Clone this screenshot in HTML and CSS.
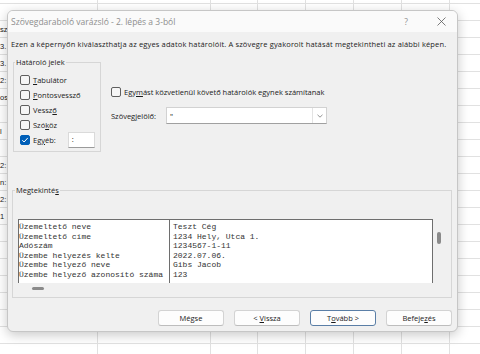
FILE: index.html
```html
<!DOCTYPE html>
<html lang="hu">
<head>
<meta charset="utf-8">
<title>Szövegdaraboló varázsló</title>
<link rel="stylesheet" href="styles.css">
</head>
<body>
<div class="sheet">
  <div class="col w98">
    <div class="labels">
      <div class="lr"></div>
      <div class="lr"><span>sz</span></div>
      <div class="lr"><span>3.</span></div>
      <div class="lr"><span>3.</span></div>
      <div class="lr"><span>2:</span></div>
      <div class="lr"><span>os</span></div>
      <div class="lr"></div>
      <div class="lr"><span>l</span></div>
      <div class="lr"></div>
      <div class="lr"><span>2:</span></div>
      <div class="lr"><span>n:</span></div>
      <div class="lr"><span>2:</span></div>
      <div class="lr"><span>1</span></div>
    </div>
  </div>
  <div class="col w113"></div>
  <div class="col w47"></div>
  <div class="col w48"></div>
  <div class="col w48"></div>
  <div class="col w48"></div>
  <div class="col w48"></div>
  <div class="col w48"></div>
</div>

<div class="dialog">
  <div class="titlebar">
    <span class="title">Szövegdaraboló varázsló - 2. lépés a 3-ból</span>
    <span class="help">?</span>
    <span class="close"><svg width="9" height="9" viewBox="0 0 9 9"><path d="M0.5 0.5L8.5 8.5M8.5 0.5L0.5 8.5" stroke="#5a5a5a" stroke-width="0.8" fill="none"/></svg></span>
  </div>
  <div class="content">
    <p class="intro">Ezen a képernyőn kiválaszthatja az egyes adatok határolóit. A szövegre gyakorolt hatását megtekintheti az alábbi képen.</p>
    <div class="top">
      <fieldset class="delims">
        <legend>Határoló jelek</legend>
        <div class="list">
          <div class="cb"><span class="box"></span><span><u>T</u>abulátor</span></div>
          <div class="cb"><span class="box"></span><span><u>P</u>ontosvessző</span></div>
          <div class="cb"><span class="box"></span><span>Vessz<u>ő</u></span></div>
          <div class="cb"><span class="box"></span><span>Szó<u>k</u>öz</span></div>
          <div class="cb other"><span class="box checked"><svg width="8" height="8" viewBox="0 0 8 8"><path d="M1.3 4.2L3.1 6L6.8 1.9" stroke="#fff" stroke-width="1" fill="none"/></svg></span><span>Eg<u>y</u>éb:</span><span class="otherinput">:</span></div>
        </div>
      </fieldset>
      <div class="opts">
        <div class="cb"><span class="box"></span><span>Egy<u>m</u>ást közvetlenül követő határolók egynek számítanak</span></div>
        <div class="qual">
          <span class="qlabel">Szöveg<u>j</u>elölő:</span>
          <div class="combo"><span class="cval">"</span><span class="arrow"><svg width="6" height="4" viewBox="0 0 6 4"><path d="M0.5 0.8L3 3.2L5.5 0.8" stroke="#777" stroke-width="0.8" fill="none"/></svg></span></div>
        </div>
      </div>
    </div>
    <fieldset class="preview">
      <legend>Megtekinté<u>s</u></legend>
      <div class="pvarea">
        <div class="pvrow">
          <div class="pv">
            <div class="pcol c1">
              <div>Üzemeltető neve</div>
              <div>Üzemeltető címe</div>
              <div>Adószám</div>
              <div>Üzembe helyezés kelte</div>
              <div>Üzembe helyező neve</div>
              <div>Üzembe helyező azonosító száma</div>
            </div>
            <div class="pcol c2">
              <div>Teszt Cég</div>
              <div>1234 Hely, Utca 1.</div>
              <div>1234567-1-11</div>
              <div>2022.07.06.</div>
              <div>Gibs Jacob</div>
              <div>123</div>
            </div>
          </div>
          <div class="vscroll"><span class="vthumb"></span></div>
        </div>
        <div class="hscroll"><span class="hthumb"></span></div>
      </div>
    </fieldset>
    <div class="buttons">
      <button class="btn">Mégse</button>
      <button class="btn">&lt; <u>V</u>issza</button>
      <button class="btn focus">T<u>o</u>vább &gt;</button>
      <button class="btn">Befeje<u>z</u>és</button>
    </div>
  </div>
</div>
</body>
</html>
```

FILE: styles.css
```css
* { box-sizing: border-box; }
html, body { margin: 0; padding: 0; }
body {
  width: 480px;
  height: 354px;
  overflow: hidden;
  background: #fff;
  position: relative;
  font-family: "Open Sans", "Noto Sans", sans-serif;
}

/* spreadsheet background */
.sheet { display: flex; height: 354px; }
.col {
  flex: none;
  height: 100%;
  border-right: 1px solid #e1e1e1;
  background-image: linear-gradient(to bottom, transparent 16px, #e1e1e1 16px);
  background-size: 100% 17px;
  background-position: 0 4px;
}
.w98 { width: 98px; }
.w113 { width: 113px; }
.w47 { width: 47px; }
.w48 { width: 48px; }
.labels { padding-top: 4px; }
.lr {
  width: 8px;
  height: 17px;
  display: flex;
  align-items: center;
  white-space: nowrap;
  font-size: 7.5px;
  color: #222;
  font-family: "Liberation Sans", sans-serif;
}

/* dialog */
.dialog {
  position: absolute;
  left: 7px;
  top: 10px;
  width: 451px;
  height: 322px;
  background: #f0f0f0;
  border: 1px solid #c6c6c6;
  border-radius: 6px;
  box-shadow: 0 3px 12px rgba(0, 0, 0, 0.22);
  overflow: hidden;
  display: flex;
  flex-direction: column;
  font-size: 7.5px;
  color: #1b1b1b;
}
.titlebar {
  flex: none;
  height: 21px;
  background: #fafafa;
  display: flex;
  align-items: center;
  padding-left: 3px;
  padding-right: 11px;
}
.title { font-size: 8.5px; color: #8e8e8e; }
.help { margin-left: auto; font-size: 8.5px; color: #8e8e8e; margin-right: 28px; }
.close { display: flex; width: 10px; justify-content: center; }

.content { flex: 1; display: flex; flex-direction: column; }
.intro { margin: 7px 0 0 3px; line-height: 10px; white-space: nowrap; letter-spacing: 0.15px; }

.top { display: flex; margin-top: 8px; padding-left: 5px; }
fieldset {
  margin: 0;
  padding: 0;
  border: 1px solid #d6d6d6;
  min-width: 0;
}
legend {
  padding: 0 1px;
  margin-left: 1px;
  line-height: 10px;
  font-size: 7.5px;
}
.delims { width: 88px; height: 95px; }
.list { padding: 5px 0 0 6px; }
.cb { display: flex; align-items: center; height: 15px; gap: 3px; white-space: nowrap; }
.box {
  flex: none;
  width: 10px;
  height: 10px;
  border: 1px solid #5f5f5f;
  border-radius: 2px;
  background: #f6f6f6;
  display: flex;
  align-items: center;
  justify-content: center;
}
.box.checked { background: #005fb8; border-color: #005fb8; }
.cb.other { height: 16px; }
.otherinput {
  margin-left: 9px;
  width: 27px;
  height: 16px;
  background: #fff;
  border: 1px solid #dadada;
  border-bottom-color: #9a9a9a;
  padding-left: 3px;
  line-height: 13px;
}

.opts { margin-left: 10px; padding-top: 27px; }
.qual { display: flex; align-items: center; margin-top: 8px; }
.qlabel { width: 55px; }
.combo {
  width: 161px;
  height: 17px;
  background: #fff;
  border: 1px solid #d2d2d2;
  border-bottom-color: #a0a0a0;
  display: flex;
  align-items: center;
}
.cval { flex: 1; padding-left: 3px; }
.arrow {
  width: 14px;
  height: 100%;
  border-left: 1px solid #e3e3e3;
  display: flex;
  align-items: center;
  justify-content: center;
}

.preview { margin: 33px 0 0 4px; width: 440px; height: 113px; }
.preview legend { margin-left: 2px; }
.pvarea { padding: 24px 0 0 5px; }
.pvrow { display: flex; }
.pv {
  width: 415px;
  height: 64px;
  background: #fff;
  border: 1px solid #6e6e6e;
  border-bottom: none;
  display: flex;
  font-family: "Liberation Mono", monospace;
  font-size: 8px;
  line-height: 9.6px;
  color: #333;
  white-space: nowrap;
}
.pcol { padding-top: 2px; height: 100%; }
.c1 { width: 151px; border-right: 1px solid #6e6e6e; }
.c2 { padding-left: 3px; }
.vscroll { width: 14px; padding: 13px 0 0 4px; }
.vthumb { display: block; width: 4px; height: 12px; border-radius: 2px; background: #8a8a8a; }
.hscroll { height: 10px; padding: 4px 0 0 14px; }
.hthumb { display: block; width: 12px; height: 3px; border-radius: 2px; background: #8a8a8a; }

.buttons {
  display: flex;
  justify-content: flex-end;
  gap: 10px;
  margin-top: 12px;
  padding-right: 5px;
}
.btn {
  width: 66px;
  height: 16px;
  padding: 0;
  background: #fdfdfd;
  border: 1px solid #d3d3d3;
  border-bottom-color: #bdbdbd;
  border-radius: 3px;
  font-family: "Open Sans", "Noto Sans", sans-serif;
  font-size: 7.5px;
  color: #1b1b1b;
}
.btn.focus { border: 1px solid #5a7ea6; }
```
